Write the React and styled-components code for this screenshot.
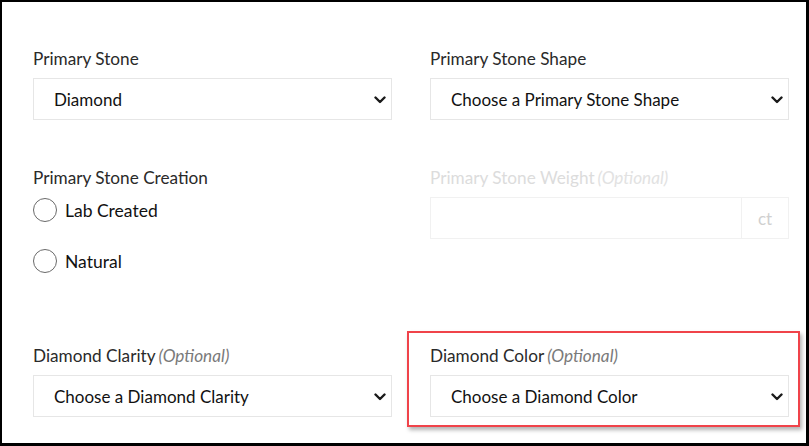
import React from "react";
import styled, { createGlobalStyle } from "styled-components";

const Global = createGlobalStyle`
  html, body { margin: 0; padding: 0; background: #fff; }
  body { font-family: "Lato", "Noto Sans", sans-serif; }
  * { box-sizing: border-box; }
`;

const Frame = styled.div`
  width: 809px;
  height: 446px;
  border-style: solid;
  border-color: #000;
  border-width: 2px 3px 3px 2px;
  background: #fff;
  padding: 47px 0 0 31px;
  overflow: hidden;
`;

const Grid = styled.div`
  display: grid;
  grid-template-columns: 359px 359px;
  column-gap: 38px;
  row-gap: 48px;
`;

const Field = styled.div`
  position: relative;
  display: flex;
  flex-direction: column;
  padding-bottom: ${(p) => p.$pb || 0}px;
`;

const Label = styled.label`
  font-size: 17.2px;
  line-height: 20px;
  height: 20px;
  color: ${(p) => (p.$disabled ? "#dcdcdc" : "#2a2a2a")};
  margin-bottom: ${(p) => (p.$tight ? 10 : 9)}px;
  white-space: nowrap;
`;

const Optional = styled.em`
  font-style: italic;
  color: ${(p) => (p.$disabled ? "#e2e2e2" : "#7a7a7a")};
  margin-left: 3px;
`;

const SelectWrap = styled.div`
  position: relative;
  height: 42px;
`;

const Select = styled.select`
  appearance: none;
  -webkit-appearance: none;
  width: 100%;
  height: 42px;
  border: 1px solid #e6e6e6;
  border-radius: 0;
  background: #fff;
  padding: 0 40px 0 20px;
  font-family: "Lato", "Noto Sans", sans-serif;
  font-size: 17px;
  color: #111;
  outline: none;
`;

const Chevron = styled.svg`
  position: absolute;
  right: 6px;
  top: 18px;
  width: 12px;
  height: 8px;
  pointer-events: none;
`;

const RadioGroup = styled.div`
  display: flex;
  flex-direction: column;
  gap: 27px;
`;

const RadioRow = styled.label`
  display: flex;
  align-items: center;
  gap: 8px;
  height: 24px;
  font-size: 17.5px;
  color: #111;
`;

const Circle = styled.span`
  width: 24px;
  height: 24px;
  border-radius: 50%;
  border: 1.5px solid #6a6a6a;
  background: #fff;
  flex: none;
`;

const InputGroup = styled.div`
  display: flex;
  height: 42px;
  border: 1px solid #f1f1f1;
`;

const Input = styled.input`
  flex: 1;
  min-width: 0;
  border: none;
  background: #fff;
  outline: none;
  font-family: "Lato", "Noto Sans", sans-serif;
  font-size: 17px;
`;

const Addon = styled.span`
  width: 47px;
  border-left: 1px solid #f1f1f1;
  display: flex;
  align-items: center;
  justify-content: center;
  font-size: 17px;
  color: #d0d0d0;
`;

const Highlight = styled.div`
  position: absolute;
  top: -15px;
  left: -23px;
  right: -11px;
  bottom: -10px;
  border: 2px solid #f0434a;
  box-shadow: 2px 3px 4px rgba(0, 0, 0, 0.3);
  pointer-events: none;
`;

const ChevronIcon = () => (
  <Chevron viewBox="0 0 12 8">
    <path d="M1.5 1.5 L6 6 L10.5 1.5" fill="none" stroke="#1a1a1a" strokeWidth="2.4" strokeLinecap="round" strokeLinejoin="round" />
  </Chevron>
);

const SelectField = ({ label, optional, value, highlight }) => (
  <Field>
    <Label>
      {label}
      {optional && <Optional>(Optional)</Optional>}
    </Label>
    <SelectWrap>
      <Select defaultValue={value}>
        <option>{value}</option>
      </Select>
      <ChevronIcon />
    </SelectWrap>
    {highlight && <Highlight />}
  </Field>
);

export default function App() {
  return (
    <>
      <Global />
      <Frame>
        <Grid>
          <SelectField label="Primary Stone" value="Diamond" />
          <SelectField label="Primary Stone Shape" value="Choose a Primary Stone Shape" />
          <Field $pb={25}>
            <Label $tight>Primary Stone Creation</Label>
            <RadioGroup>
              <RadioRow>
                <Circle />
                Lab Created
              </RadioRow>
              <RadioRow>
                <Circle />
                Natural
              </RadioRow>
            </RadioGroup>
          </Field>
          <Field>
            <Label $disabled>
              Primary Stone Weight<Optional $disabled>(Optional)</Optional>
            </Label>
            <InputGroup>
              <Input disabled />
              <Addon>ct</Addon>
            </InputGroup>
          </Field>
          <SelectField label="Diamond Clarity" optional value="Choose a Diamond Clarity" />
          <SelectField label="Diamond Color" optional value="Choose a Diamond Color" highlight />
        </Grid>
      </Frame>
    </>
  );
}
